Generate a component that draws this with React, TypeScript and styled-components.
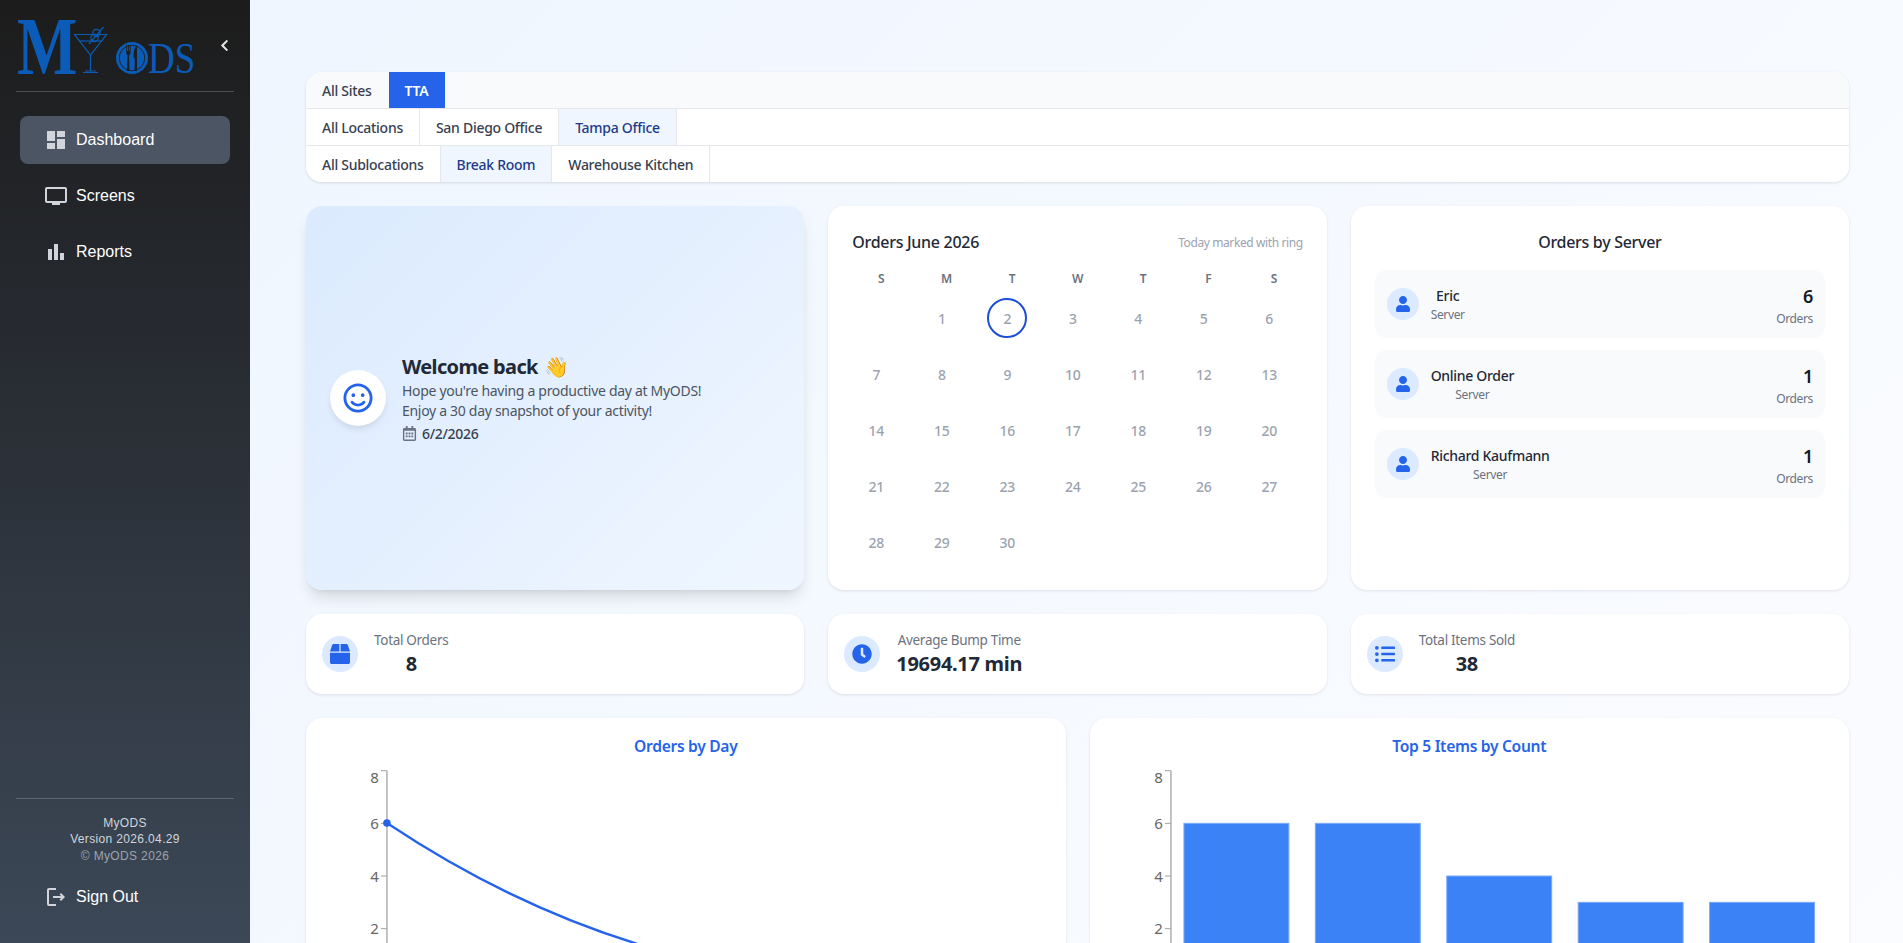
import React from "react";
import styled, { createGlobalStyle } from "styled-components";
import { FaBox, FaChevronLeft, FaClock, FaListUl, FaRegCalendarAlt, FaRegSmile, FaUser } from "react-icons/fa";
import { MdBarChart, MdDashboard, MdOutlineLogout, MdOutlineTv } from "react-icons/md";

const GlobalStyle = createGlobalStyle`
  html, body { margin: 0; padding: 0; height: 100%; overflow: hidden; }
  * { box-sizing: border-box; }
  body { font-family: "Noto Sans", "Open Sans", sans-serif; letter-spacing: -0.3px; }
`;

const Shell = styled.div`
  display: flex;
  width: 100%;
  height: 100vh;
  overflow: hidden;
`;

const Sidebar = styled.aside`
  flex: 0 0 250px;
  display: flex;
  flex-direction: column;
  height: 100%;
  background: linear-gradient(180deg, #1c1c1c 0%, #25282d 30%, #3c4857 100%);
  font-family: "Liberation Sans", Arial, sans-serif;
  letter-spacing: 0;
`;

const SidebarHeader = styled.div`
  display: flex;
  align-items: center;
  height: 92px;
  margin: 0 16px;
  border-bottom: 1px solid #4b4d50;
`;

const LogoSvg = styled.svg`
  flex: none;
  margin-left: -16px;
  display: block;
`;

const CollapseButton = styled.button`
  display: flex;
  padding: 0;
  margin-left: 16px;
  border: 0;
  background: none;
  color: #e5e7eb;
  cursor: pointer;
`;

const Nav = styled.nav`
  display: flex;
  flex-direction: column;
  gap: 8px;
  padding: 24px 20px 0;
`;

const NavItem = styled.a<{ $active?: boolean }>`
  display: flex;
  align-items: center;
  gap: 8px;
  height: 48px;
  padding-left: 24px;
  border-radius: 8px;
  color: #fff;
  font-size: 16px;
  background: ${(p) => (p.$active ? "#4c5564" : "transparent")};
  svg { flex: none; color: #d1d5db; }
`;

const SidebarFooter = styled.div`
  margin-top: auto;
  padding-bottom: 22px;
`;

const FooterRule = styled.div`
  height: 1px;
  margin: 0 16px;
  background: #5a6472;
`;

const Version = styled.div`
  padding: 16px 0 9px;
  text-align: center;
  font-size: 12px;
  line-height: 16px;
  letter-spacing: 0.35px;
  color: #d1d5db;
`;

const Copyright = styled.div`
  margin-top: 1px;
  color: #9ca3af;
`;

const FooterAction = styled.div`
  padding: 0 20px;
`;

const Main = styled.main`
  flex: 1;
  min-width: 0;
  height: 100%;
  overflow: hidden;
  padding: 72px 54px 0 56px;
  background: linear-gradient(135deg, #eff6ff 0%, #fbfcff 100%);
`;

const FilterPanel = styled.section`
  border-radius: 16px;
  overflow: hidden;
  background: #fff;
  box-shadow: 0 1px 3px rgba(0, 0, 0, 0.12);
`;

const FilterRow = styled.div<{ $top?: boolean }>`
  display: flex;
  height: ${(p) => (p.$top ? "36px" : "37px")};
  background: ${(p) => (p.$top ? "#f9fafb" : "#fff")};
  border-top: ${(p) => (p.$top ? "0" : "1px solid #e5e7eb")};
`;

const FilterTab = styled.div<{ $variant?: "solid" | "soft"; $plain?: boolean }>`
  display: flex;
  align-items: center;
  padding: 0 16px;
  font-size: 14px;
  font-weight: ${(p) => (p.$variant === "solid" ? 600 : 500)};
  letter-spacing: -0.28px;
  white-space: nowrap;
  color: ${(p) => (p.$variant === "solid" ? "#fff" : p.$variant === "soft" ? "#1e3a8a" : "#374151")};
  background: ${(p) => (p.$variant === "solid" ? "#2563eb" : p.$variant === "soft" ? "#eff6ff" : "transparent")};
  border-right: 1px solid ${(p) => (p.$plain ? "transparent" : "#e5e7eb")};
`;

const TopGrid = styled.div`
  display: grid;
  grid-template-columns: repeat(3, 1fr);
  gap: 24px;
  margin-top: 24px;
`;

const Card = styled.section`
  border-radius: 16px;
  background: #fff;
  box-shadow: 0 1px 3px rgba(0, 0, 0, 0.1);
`;

const WelcomeCard = styled(Card)`
  display: flex;
  align-items: center;
  gap: 16px;
  height: 384px;
  padding: 0 24px;
  background: linear-gradient(135deg, #dbeafe 0%, #eff6ff 100%);
  box-shadow: 0 10px 15px -3px rgba(0, 0, 0, 0.12), 0 4px 6px -4px rgba(0, 0, 0, 0.1);
`;

const SmileBadge = styled.div`
  flex: none;
  display: flex;
  align-items: center;
  justify-content: center;
  width: 56px;
  height: 56px;
  border-radius: 50%;
  background: #fff;
  color: #2563eb;
  box-shadow: 0 4px 6px -1px rgba(0, 0, 0, 0.1);
`;

const WelcomeTitle = styled.h2`
  display: flex;
  align-items: center;
  gap: 7px;
  margin: 0;
  font-size: 20px;
  line-height: 28px;
  font-weight: 700;
  letter-spacing: -0.65px;
  color: #1f2937;
`;

const WaveGlyph = styled.span`
  font-size: 20px;
  line-height: 1;
  font-family: "Noto Color Emoji", "Noto Emoji", "Noto Sans", sans-serif;
`;

const WelcomeLine = styled.p`
  margin: 0;
  font-size: 14px;
  line-height: 20px;
  color: #4b5563;
`;

const DateRow = styled.div`
  display: flex;
  align-items: center;
  gap: 5px;
  margin-top: 3px;
  font-size: 14px;
  line-height: 20px;
  font-weight: 500;
  color: #374151;
  svg { color: #6b7280; }
`;

const CalendarCard = styled(Card)`
  height: 384px;
  padding: 24px;
`;

const CalendarHead = styled.div`
  display: flex;
  align-items: center;
  justify-content: space-between;
  height: 24px;
`;

const CardTitle = styled.h3`
  margin: 0;
  font-size: 16px;
  line-height: 24px;
  font-weight: 500;
  color: #1f2937;
`;

const CalendarHint = styled.span`
  font-size: 12px;
  letter-spacing: -0.4px;
  color: #9ca3af;
`;

const WeekGrid = styled.div`
  display: grid;
  grid-template-columns: repeat(7, 1fr);
  column-gap: 8px;
  margin-top: 12px;
`;

const WeekDay = styled.div`
  height: 24px;
  line-height: 25px;
  text-align: center;
  font-size: 12px;
  font-weight: 600;
  color: #6b7280;
`;

const DayGrid = styled.div`
  display: grid;
  grid-template-columns: repeat(7, 1fr);
  gap: 8px;
  margin-top: 4px;
`;

const Day = styled.div`
  display: flex;
  align-items: center;
  justify-content: center;
  width: 48px;
  height: 48px;
  font-size: 14px;
  font-weight: 500;
  color: #9ca3af;
`;

const TodayRing = styled.span`
  display: flex;
  align-items: center;
  justify-content: center;
  width: 40px;
  height: 40px;
  border: 2px solid #1d4ed8;
  border-radius: 50%;
`;

const ServerCard = styled(Card)`
  height: 384px;
  padding: 24px;
`;

const CenterTitle = styled(CardTitle)`
  text-align: center;
`;

const ServerList = styled.div`
  display: flex;
  flex-direction: column;
  gap: 12px;
  margin-top: 16px;
`;

const ServerRow = styled.div`
  display: flex;
  align-items: center;
  justify-content: space-between;
  height: 68px;
  padding: 0 12px;
  border-radius: 12px;
  background: #f9fafb;
`;

const ServerLead = styled.div`
  display: flex;
  align-items: center;
  gap: 12px;
`;

const IconCircle = styled.div<{ $size: number }>`
  flex: none;
  display: flex;
  align-items: center;
  justify-content: center;
  width: ${(p) => p.$size}px;
  height: ${(p) => p.$size}px;
  border-radius: 50%;
  background: #dbeafe;
  color: #2563eb;
`;

const ServerMeta = styled.div`
  text-align: center;
`;

const ServerName = styled.div`
  font-size: 14px;
  line-height: 20px;
  font-weight: 500;
  color: #1f2937;
`;

const SmallNote = styled.div`
  font-size: 12px;
  line-height: 17px;
  letter-spacing: -0.35px;
  color: #6b7280;
`;

const ServerCount = styled.div`
  padding-top: 2px;
  text-align: right;
`;

const CountValue = styled.div`
  font-size: 18px;
  line-height: 27px;
  font-weight: 600;
  color: #111827;
`;

const StatsGrid = styled.div`
  display: grid;
  grid-template-columns: repeat(3, 1fr);
  gap: 24px;
  margin-top: 24px;
`;

const StatCard = styled(Card)`
  display: flex;
  align-items: center;
  gap: 16px;
  height: 80px;
  padding: 0 16px;
`;

const StatBody = styled.div`
  text-align: center;
`;

const StatLabel = styled.div`
  font-size: 13.5px;
  line-height: 20px;
  color: #6b7280;
`;

const StatValue = styled.div`
  font-size: 20px;
  line-height: 28px;
  font-weight: 700;
  color: #1f2937;
`;

const ChartsGrid = styled.div`
  display: grid;
  grid-template-columns: repeat(2, 1fr);
  gap: 24px;
  margin-top: 24px;
`;

const ChartCard = styled(Card)`
  height: 340px;
  padding-top: 17px;
`;

const ChartTitle = styled.h3`
  margin: 0 0 1px;
  text-align: center;
  font-size: 15.6px;
  line-height: 22px;
  font-weight: 600;
  letter-spacing: -0.3px;
  color: #2563eb;
`;

const ChartSvg = styled.svg`
  display: block;
  width: 100%;
  height: 300px;
  font-family: "Noto Sans", sans-serif;
  font-size: 15px;
  letter-spacing: 0;
`;

const zero = 223.5;
const unit = 26.35;
const toY = (v: number) => zero - unit * v;
const axisX = 81;

function Axis() {
  return (
    <g>
      <line x1={axisX} y1={toY(8)} x2={axisX} y2={zero} stroke="#a2a2a2" strokeWidth="1.3" />
      {[8, 6, 4, 2].map((v) => (
        <g key={v}>
          <line x1={axisX - 6} y1={toY(v)} x2={axisX} y2={toY(v)} stroke="#a2a2a2" />
          <text x={axisX - 8} y={toY(v) + (v === 8 ? 12 : 5.5)} textAnchor="end" fill="#666">
            {v}
          </text>
        </g>
      ))}
    </g>
  );
}

const bars = [
  { x: 94, v: 6 },
  { x: 225.5, v: 6 },
  { x: 357, v: 4 },
  { x: 488.5, v: 3 },
  { x: 620, v: 3 },
];

const week = ["S", "M", "T", "W", "T", "F", "S"];
const servers = [
  { name: "Eric", count: 6 },
  { name: "Online Order", count: 1 },
  { name: "Richard Kaufmann", count: 1 },
];
const days = Array.from({ length: 30 }, (_, i) => i + 1);

function Logo() {
  const blue = "#0a5cb8";
  const dark = "#1e1e1e";
  return (
    <LogoSvg width="202" height="91" viewBox="0 0 202 91" aria-label="MyODS">
      <text transform="translate(17 73.5) scale(0.78 1)" fontFamily="'Liberation Serif', serif" fontWeight="700" fontSize="82" fill={blue}>
        M
      </text>
      <g fill="none" stroke={blue} strokeWidth="1.2">
        <path d="M74.5 34.5 H106.5 L90.5 55 Z" />
        <path d="M79 41 H102" />
        <path d="M90.5 55 V71" />
        <path d="M83 72.5 H98 M85 71 H96" />
        <path d="M89 44 L103.5 27" />
        <circle cx="96.5" cy="33" r="3.6" />
        <circle cx="94.5" cy="38" r="3.6" />
      </g>
      <circle cx="132" cy="58" r="16" fill={blue} />
      <circle cx="132" cy="58" r="12.8" fill="none" stroke={dark} strokeWidth="0.9" />
      <path d="M126.2 45 V52 Q126.2 55 127.6 55.6 L127 71 H129.6 L129 55.6 Q130.6 55 130.6 52 V45 H129.7 V51 H128.8 V45 H128 V51 H127.1 V45 Z" fill={dark} />
      <path d="M134.5 71 H137 V45 Q133.5 48 133.5 57 L134.8 59 Z" fill={dark} />
      <text transform="translate(148 73) scale(0.82 1)" fontFamily="'Liberation Serif', serif" fontSize="45" fill={blue}>
        DS
      </text>
    </LogoSvg>
  );
}

export default function App() {
  return (
    <Shell>
      <GlobalStyle />
      <Sidebar>
        <SidebarHeader>
          <Logo />
          <CollapseButton aria-label="Collapse sidebar">
            <FaChevronLeft size={13} />
          </CollapseButton>
        </SidebarHeader>
        <Nav>
          <NavItem $active>
            <MdDashboard size={24} />
            Dashboard
          </NavItem>
          <NavItem>
            <MdOutlineTv size={24} />
            Screens
          </NavItem>
          <NavItem>
            <MdBarChart size={24} />
            Reports
          </NavItem>
        </Nav>
        <SidebarFooter>
          <FooterRule />
          <Version>
            <div>MyODS</div>
            <div>Version 2026.04.29</div>
            <Copyright>© MyODS 2026</Copyright>
          </Version>
          <FooterAction>
            <NavItem>
              <MdOutlineLogout size={24} />
              Sign Out
            </NavItem>
          </FooterAction>
        </SidebarFooter>
      </Sidebar>
      <Main>
        <FilterPanel>
          <FilterRow $top>
            <FilterTab $plain>All Sites</FilterTab>
            <FilterTab $variant="solid" $plain>TTA</FilterTab>
          </FilterRow>
          <FilterRow>
            <FilterTab>All Locations</FilterTab>
            <FilterTab>San Diego Office</FilterTab>
            <FilterTab $variant="soft">Tampa Office</FilterTab>
          </FilterRow>
          <FilterRow>
            <FilterTab>All Sublocations</FilterTab>
            <FilterTab $variant="soft">Break Room</FilterTab>
            <FilterTab>Warehouse Kitchen</FilterTab>
          </FilterRow>
        </FilterPanel>

        <TopGrid>
          <WelcomeCard>
            <SmileBadge>
              <FaRegSmile size={30} />
            </SmileBadge>
            <div>
              <WelcomeTitle>
                Welcome back <WaveGlyph>👋</WaveGlyph>
              </WelcomeTitle>
              <WelcomeLine>Hope you're having a productive day at MyODS!</WelcomeLine>
              <WelcomeLine>Enjoy a 30 day snapshot of your activity!</WelcomeLine>
              <DateRow>
                <FaRegCalendarAlt size={15} />
                6/2/2026
              </DateRow>
            </div>
          </WelcomeCard>

          <CalendarCard>
            <CalendarHead>
              <CardTitle>Orders June 2026</CardTitle>
              <CalendarHint>Today marked with ring</CalendarHint>
            </CalendarHead>
            <WeekGrid>
              {week.map((d, i) => (
                <WeekDay key={i}>{d}</WeekDay>
              ))}
            </WeekGrid>
            <DayGrid>
              <Day />
              {days.map((d) => (
                <Day key={d}>{d === 2 ? <TodayRing>{d}</TodayRing> : d}</Day>
              ))}
            </DayGrid>
          </CalendarCard>

          <ServerCard>
            <CenterTitle>Orders by Server</CenterTitle>
            <ServerList>
              {servers.map((s) => (
                <ServerRow key={s.name}>
                  <ServerLead>
                    <IconCircle $size={32}>
                      <FaUser size={16} />
                    </IconCircle>
                    <ServerMeta>
                      <ServerName>{s.name}</ServerName>
                      <SmallNote>Server</SmallNote>
                    </ServerMeta>
                  </ServerLead>
                  <ServerCount>
                    <CountValue>{s.count}</CountValue>
                    <SmallNote>Orders</SmallNote>
                  </ServerCount>
                </ServerRow>
              ))}
            </ServerList>
          </ServerCard>
        </TopGrid>

        <StatsGrid>
          <StatCard>
            <IconCircle $size={36}>
              <FaBox size={20} />
            </IconCircle>
            <StatBody>
              <StatLabel>Total Orders</StatLabel>
              <StatValue>8</StatValue>
            </StatBody>
          </StatCard>
          <StatCard>
            <IconCircle $size={36}>
              <FaClock size={20} />
            </IconCircle>
            <StatBody>
              <StatLabel>Average Bump Time</StatLabel>
              <StatValue>19694.17 min</StatValue>
            </StatBody>
          </StatCard>
          <StatCard>
            <IconCircle $size={36}>
              <FaListUl size={20} />
            </IconCircle>
            <StatBody>
              <StatLabel>Total Items Sold</StatLabel>
              <StatValue>38</StatValue>
            </StatBody>
          </StatCard>
        </StatsGrid>

        <ChartsGrid>
          <ChartCard>
            <ChartTitle>Orders by Day</ChartTitle>
            <ChartSvg viewBox="0 0 760 300" preserveAspectRatio="xMinYMin meet">
              <Axis />
              <path d="M81 65 C174 127 284 180 409 206" fill="none" stroke="#2563eb" strokeWidth="2.3" />
              <circle cx={81} cy={65} r={3.8} fill="#2563eb" />
            </ChartSvg>
          </ChartCard>
          <ChartCard>
            <ChartTitle>Top 5 Items by Count</ChartTitle>
            <ChartSvg viewBox="0 0 760 300" preserveAspectRatio="xMinYMin meet">
              <Axis />
              {bars.map((b) => (
                <rect key={b.x} x={b.x} y={toY(b.v)} width={105} height={unit * b.v} fill="#3b82f6" stroke="#7aa9f7" strokeWidth="1" />
              ))}
            </ChartSvg>
          </ChartCard>
        </ChartsGrid>
      </Main>
    </Shell>
  );
}
